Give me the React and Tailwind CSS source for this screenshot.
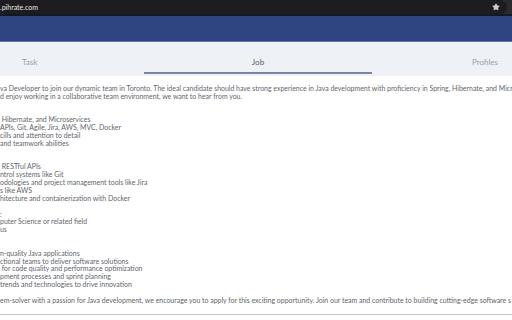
import { Star } from "lucide-react";

const lines = [
  "va Developer to join our dynamic team in Toronto. The ideal candidate should have strong experience in Java development with proficiency in Spring, Hibernate, and Micro",
  "d enjoy working in a collaborative team environment, we want to hear from you.",
  "",
  "",
  " Hibernate, and Microservices",
  "APIs, Git, Agile, Jira, AWS, MVC, Docker",
  "cills and attention to detail",
  "and teamwork abilities",
  "",
  "",
  " RESTful APIs",
  "ntrol systems like Git",
  "odologies and project management tools like Jira",
  "s like AWS",
  "hitecture and containerization with Docker",
  "",
  ":",
  "puter Science or related field",
  "us",
  "",
  "",
  "n-quality Java applications",
  "ctional teams to deliver software solutions",
  " for code quality and performance optimization",
  "pment processes and sprint planning",
  "trends and technologies to drive innovation",
  "",
  "em-solver with a passion for Java development, we encourage you to apply for this exciting opportunity. Join our team and contribute to building cutting-edge software s",
];

export default function App() {
  return (
    <div className="w-[512px] h-[320px] overflow-hidden bg-white font-['Lato',sans-serif]">
      <div className="h-[14px] flex bg-[#2a2a2c]">
        <div className="flex-1 flex items-center justify-between bg-[#1d1d1f] rounded-r-full pr-[7px] mr-[5px]">
          <span className="text-[7px] text-[#e8e8e8] leading-none">.pihrate.com</span>
          <Star size={8} className="text-[#d0d0d0]" fill="#d0d0d0" strokeWidth={1.5} />
        </div>
      </div>
      <div className="h-[2px] bg-[#111827]" />
      <div className="h-[25px] bg-[#2f4582]" />
      <div className="h-[1px] bg-[#6377ad]" />
      <div className="h-[34px] bg-[#eef1f5] flex items-stretch text-[8px]">
        <div className="w-[144px] flex items-center pl-[22px] pt-[6px] text-[#9ba1aa]">Task</div>
        <div className="w-[228px] flex flex-col">
          <div className="flex-1 flex items-center justify-center pt-[9px] text-[#555a62]">Job</div>
          <div className="h-[2px] bg-[#7c84a1] mb-[2px]" />
        </div>
        <div className="flex-1 flex items-center justify-end pr-[14px] pt-[6px] text-[#9ba1aa]">Profiles</div>
      </div>
      <div className="pt-[9px] text-[6.95px] leading-[7.85px] text-[#62656a] whitespace-pre">
        {lines.map((l, i) => (
          <div key={i} className="h-[7.85px] overflow-hidden">
            {l || "\u00a0"}
          </div>
        ))}
      </div>
      <div className="mt-[9px] h-[1px] bg-[#c5c8d0]" />
    </div>
  );
}
